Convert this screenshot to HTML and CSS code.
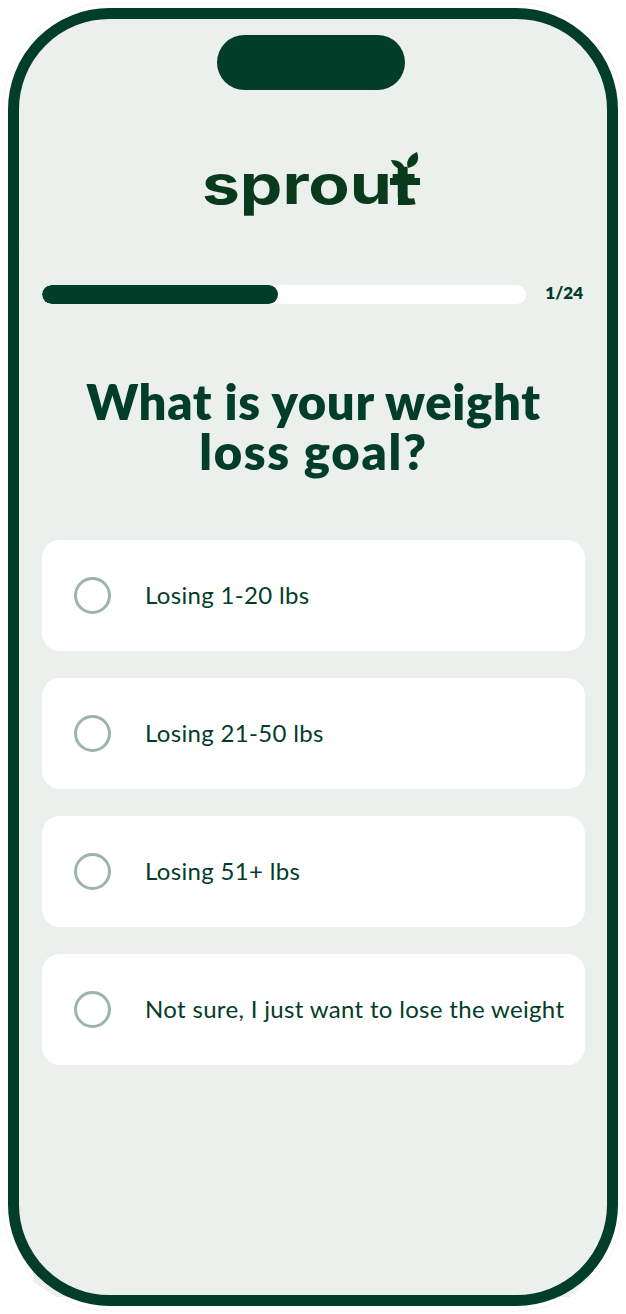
FILE: index.html
```html
<!DOCTYPE html>
<html lang="en">
<head>
<meta charset="utf-8">
<title>Sprout quiz</title>
<link rel="stylesheet" href="styles.css">
</head>
<body>
<main class="phone">
  <svg class="frame" viewBox="0 0 610 1298" aria-hidden="true">
    <rect class="frame-glow" x="-5" y="-5" width="620" height="1308" rx="107"/>
    <path class="frame-patch" d="M25 1262 V1274 L49 1289 H75 L60 1270Z"/>
    <path class="frame-patch" d="M583 1262 V1269 L561 1289 H535 L550 1270Z"/>
    <rect class="frame-line" x="5.500" y="5.500" width="599" height="1287" rx="96"/>
  </svg>
  <div class="notch"></div>
  <header class="brand">
    <span class="wordmark">sprout</span>
    <svg class="leaf" viewBox="0 0 34 53" aria-hidden="true">
      <path d="M18 17 C16 11 12 8 4 8 C6 14 11 18 18 17Z"/>
      <path d="M21 16 C18 9 23 3 30 0 C33 8 30 14 21 16Z"/>
      <path d="M11 53 V33 H3 V26 H11 C11 22 13 19 17 16 L20 17 C19 20 20 23 20 26 H33 V33 H20 V53Z"/>
    </svg>
  </header>
  <section class="progress">
    <div class="track"><div class="fill"></div></div>
    <span class="count">1/24</span>
  </section>
  <h1 class="title">What is your weight<br><span class="title-second">loss goal?</span></h1>
  <ul class="options">
    <li class="option"><span class="radio"></span><span class="label">Losing 1-20 lbs</span></li>
    <li class="option"><span class="radio"></span><span class="label">Losing 21-50 lbs</span></li>
    <li class="option"><span class="radio"></span><span class="label">Losing 51+ lbs</span></li>
    <li class="option"><span class="radio"></span><span class="label">Not sure, I just want to lose the weight</span></li>
  </ul>
</main>
</body>
</html>
```
FILE: styles.css
```css
* { box-sizing: border-box; }
html, body { margin: 0; height: 100%; background: #fff; }
body { padding: 8px; font-family: "Lato", sans-serif; color: #023d29; }
.phone {
  position: relative;
  width: 610px;
  height: 1298px;
  padding: 27px 33px 0 34px;
  display: flex;
  flex-direction: column;
}
.frame {
  position: absolute;
  inset: 0;
  width: 100%;
  height: 100%;
  overflow: visible;
}
.frame-glow { fill: none; stroke: #f5f7f6; stroke-width: 1; }
.frame-line { fill: #ebf0ed; stroke: #023d29; stroke-width: 11; }
.frame-patch { fill: #ebf0ed; }
.notch {
  position: relative;
  width: 188px;
  height: 55px;
  border-radius: 28px;
  background: #023d29;
  align-self: center;
  margin-right: 6px;
  flex: none;
}
.brand {
  position: relative;
  height: 64px;
  margin-top: 62px;
  display: flex;
  justify-content: center;
  flex: none;
}
.wordmark {
  font-family: "Inter", sans-serif;
  font-weight: 700;
  font-size: 55px;
  line-height: 64px;
  color: #0a3a1c;
  transform: scaleX(1.23);
  margin-right: 8px;
}
.leaf {
  position: absolute;
  left: 345px;
  top: 0;
  width: 34px;
  height: 53px;
  fill: #0a3a1c;
}
.progress {
  position: relative;
  display: flex;
  align-items: center;
  justify-content: space-between;
  margin-top: 69px;
  flex: none;
}
.track {
  width: 484px;
  height: 19px;
  border-radius: 10px;
  background: #fff;
  overflow: hidden;
}
.fill { width: 236px; height: 100%; border-radius: 10px; background: #023d29; }
.count { font-weight: 800; font-size: 17px; line-height: 15px; margin: 0 2px 4px 0; }
.title {
  position: relative;
  margin: 72px 0 0;
  font-weight: 800;
  font-size: 49px;
  line-height: 50px;
  letter-spacing: 0.7px;
  text-align: center;
  flex: none;
}
.title-second { letter-spacing: 1.7px; }
.options {
  position: relative;
  list-style: none;
  margin: 64px 0 0;
  padding: 0;
  display: flex;
  flex-direction: column;
  gap: 27px;
}
.option {
  height: 111px;
  border-radius: 18px;
  background: #fff;
  display: flex;
  align-items: center;
  padding-left: 32px;
}
.radio {
  width: 37px;
  height: 37px;
  border: 3px solid #9cb5ac;
  border-radius: 50%;
  flex: none;
}
.label {
  margin-left: 34px;
  padding-bottom: 2px;
  font-size: 24px;
  letter-spacing: 0.33px;
  white-space: nowrap;
}
```
